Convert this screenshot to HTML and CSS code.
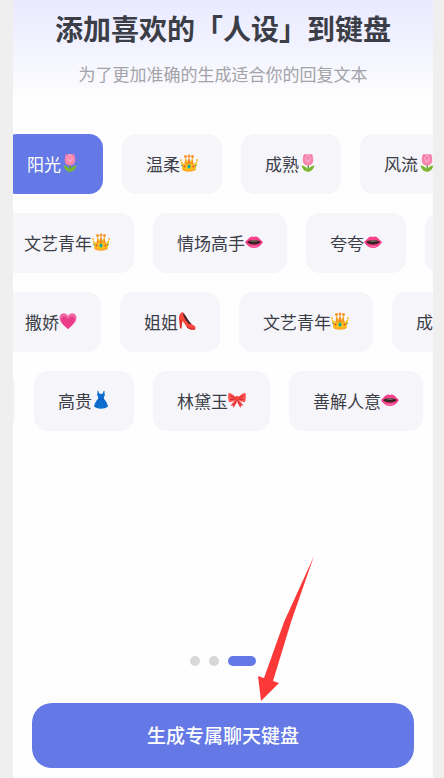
FILE: index.html
```html
<!DOCTYPE html>
<html lang="zh-CN">
<head>
    <meta charset="utf-8">
    <meta name="viewport" content="width=device-width, initial-scale=1">
    <title>添加人设</title>
    <link rel="stylesheet" href="styles.css">
</head>

<body>
    <!-- icon shapes used by the chips -->
    <svg class="sprite" aria-hidden="true">
        <symbol id="tulip" viewBox="0 0 36 36">
            <path d="M17 20h3v14h-3z" fill="#689f38"/>
            <path d="M18 36C10 34 7 30 5 23c6 0 10 3 13 9 3-6 7-9 13-9-2 7-5 11-13 13z" fill="#7cb82f"/>
            <path d="M9 2c1-2 3-2 5-1 2-2 6-2 8 0 2-1 5-1 5 1 3 11 2 21-9 21S6 13 9 2z" fill="#f583ae"/>
            <path d="M14 2c2-2 6-2 8 0 3 6 2 14-4 16-6-2-7-10-4-16z" fill="#f9a0c0"/>
            <path d="M10 2c4 1 7 4 8 9 1-5 4-8 8-9" fill="none" stroke="#ee6a9c" stroke-width="1.5"/>
        </symbol>
        <symbol id="crown" viewBox="0 0 36 36">
            <path d="M1 13l8 8 2-14 7 13 7-13 2 14 8-8-4 18c-4 5-22 5-26 0z" fill="#fcc21b"/>
            <path d="M11 8l2 13h-4zM18 5l4 15h-8zM25 8l2 13h-4z" fill="#ef8a25"/>
            <path d="M5 28c6 5 20 5 26 0v4c-5 4-21 4-26 0z" fill="#ffa726"/>
            <circle cx="2" cy="12" r="2" fill="#ffb82e"/>
            <circle cx="34" cy="12" r="2" fill="#ffb82e"/>
            <circle cx="11" cy="5" r="3" fill="#f79329"/>
            <circle cx="18" cy="4" r="3" fill="#f79329"/>
            <circle cx="25" cy="5" r="3" fill="#f79329"/>
            <ellipse cx="18" cy="25" rx="3" ry="4" fill="#00a99d"/>
            <circle cx="9" cy="25" r="2" fill="#e5393b"/>
            <circle cx="27" cy="25" r="2" fill="#e5393b"/>
            <circle cx="4" cy="23" r="1.5" fill="#26a69a"/>
            <circle cx="32" cy="23" r="1.5" fill="#26a69a"/>
        </symbol>
        <symbol id="lips" viewBox="0 0 36 36">
            <path d="M0 18C6 13 10 7 14 7c2 0 3 1 4 1s2-1 4-1c4 0 8 6 14 11-5 8-11 12-18 12S5 26 0 18z" fill="#f8408c"/>
            <path d="M4 18c5-3 9-4 14-4s9 1 14 4c-4 4-9 5-14 5S8 22 4 18z" fill="#3a2422"/>
            <path d="M9 16c5-2 13-2 18 0-5 2-13 2-18 0z" fill="#8e7874"/>
            <path d="M12 26c4 2 8 2 12 0" fill="none" stroke="#ff83b5" stroke-width="2"/>
        </symbol>
        <symbol id="heart" viewBox="0 0 36 36">
            <path d="M18 34C10 27 1 21 1 11 1 1 14-1 18 8c4-9 17-7 17 3 0 10-9 16-17 23z" fill="#f06ba5"/>
            <path d="M18 34C11 27 4 21 4 13c0-8 10-9 14-1 4-8 14-7 14 1 0 8-7 14-14 21z" fill="#ea3c87"/>
            <path d="M5 12c2-6 9-6 13 1 4-7 11-7 13-1" fill="none" stroke="#f58bb9" stroke-width="1.5"/>
        </symbol>
        <symbol id="heel" viewBox="0 0 36 36">
            <path d="M2 12l7 4-2 17H4z" fill="#e02f2b"/>
            <path d="M9 0C4 2 1 8 2 15c7 1 10 6 14 13 3 6 9 8 18 7 2-3 1-6-2-8-4-2-7-4-10-8C17 12 14 4 9 0z" fill="#f9473c"/>
            <path d="M10 2c0 5 4 13 10 20 3 3 6 2 7 1-3-2-5-5-8-9-3-5-5-9-9-12z" fill="#35252b"/>
            <path d="M18 30c4 4 10 5 16 4" fill="none" stroke="#b71c1c" stroke-width="2"/>
        </symbol>
        <symbol id="dress" viewBox="0 0 36 36">
            <path d="M11 0h2c0 4 2 6 5 6s5-2 5-6h2c0 4 0 6 1 8-2 3-3 5-2 8 4 4 7 9 8 15-8 6-20 6-28 0 1-6 4-11 8-15 1-3 0-5-2-8 1-2 1-4 1-8z" fill="#0d6fd0"/>
            <path d="M12 15h12v2H12z" fill="#0b57b0"/>
            <path d="M14 19l-4 13M22 19l4 13" fill="none" stroke="#0b5fbd" stroke-width="1.5"/>
        </symbol>
        <symbol id="bow" viewBox="0 0 36 36">
            <path d="M16 17L5 29l5 0 1 5 8-14zM20 17l11 12h-5l-1 5-8-14z" fill="#e93b3f"/>
            <path d="M16 13C11 7 4 3 1 4c-1 5-1 12 1 18 6 1 11-2 14-5zM20 13c5-6 12-10 15-9 1 5 1 12-1 18-6 1-11-2-14-5z" fill="#ff5252"/>
            <path d="M15 15L5 9M15 16L5 17M21 15l10-6M21 16l10 1" fill="none" stroke="#c62828" stroke-width="2"/>
            <rect x="14" y="10" width="8" height="10" rx="3" fill="#f44336"/>
        </symbol>
    </svg>

    <main class="screen">
        <header class="intro">
            <h1>添加喜欢的「人设」到键盘</h1>
            <p>为了更加准确的生成适合你的回复文本</p>
        </header>

        <div class="rows">
            <div class="row row-1">
                <button type="button" class="chip active">阳光<svg class="emoji"><use href="#tulip"/></svg></button>
                <button type="button" class="chip">温柔<svg class="emoji"><use href="#crown"/></svg></button>
                <button type="button" class="chip">成熟<svg class="emoji"><use href="#tulip"/></svg></button>
                <button type="button" class="chip">风流<svg class="emoji"><use href="#tulip"/></svg></button>
            </div>
            <div class="row row-2">
                <button type="button" class="chip">文艺青年<svg class="emoji"><use href="#crown"/></svg></button>
                <button type="button" class="chip">情场高手<svg class="emoji"><use href="#lips"/></svg></button>
                <button type="button" class="chip">夸夸<svg class="emoji"><use href="#lips"/></svg></button>
                <button type="button" class="chip" aria-label="更多"></button>
            </div>
            <div class="row row-3">
                <button type="button" class="chip">撒娇<svg class="emoji"><use href="#heart"/></svg></button>
                <button type="button" class="chip">姐姐<svg class="emoji"><use href="#heel"/></svg></button>
                <button type="button" class="chip">文艺青年<svg class="emoji"><use href="#crown"/></svg></button>
                <button type="button" class="chip">成<svg class="emoji"><use href="#tulip"/></svg></button>
            </div>
            <div class="row row-4">
                <button type="button" class="chip" aria-label="更多"></button>
                <button type="button" class="chip">高贵<svg class="emoji"><use href="#dress"/></svg></button>
                <button type="button" class="chip">林黛玉<svg class="emoji"><use href="#bow"/></svg></button>
                <button type="button" class="chip">善解人意<svg class="emoji"><use href="#lips"/></svg></button>
            </div>
        </div>

        <footer class="bottom">
            <div class="dots">
                <span class="dot"></span>
                <span class="dot"></span>
                <span class="dot current"></span>
            </div>
            <button type="button" class="submit">生成专属聊天键盘</button>
            <svg class="arrow" viewBox="0 0 56 145" aria-hidden="true">
                <path d="M56 0L26 66 6 122 0 120l3 25 18-18-6-2L33 66z" fill="#fc3838"/>
            </svg>
        </footer>
    </main>
</body>
</html>
```
FILE: styles.css
```css
* {
    box-sizing: border-box;
}

body {
    margin: 0;
    padding: 0 11px 0 13px;
    background: #efefef;
    font-family: "Noto Sans CJK SC", sans-serif;
    color: #3b3d47;
}

button {
    border: none;
    font-family: inherit;
    cursor: pointer;
}

.sprite {
    display: none;
}

.screen {
    display: flex;
    flex-direction: column;
    min-height: 100vh;
    padding: 8px 0 10px;
    overflow: hidden;
    background: #fefefe linear-gradient(#e9eaff, #f5f5ff 60px, #fefefe 100px) no-repeat;
}

.intro {
    text-align: center;
}

.intro h1 {
    margin: 0;
    font-size: 28px;
    font-weight: 700;
    line-height: 40px;
}

.intro p {
    margin: 14px 0 0;
    font-size: 17px;
    line-height: 24px;
    color: #a3a3a8;
}

/* chips */
.rows {
    display: flex;
    flex-direction: column;
    gap: 19px;
    margin-top: 48px;
}

.row {
    display: flex;
    gap: 19px;
}

/* every row is scrolled by a different amount */
.row-1 {
    margin-left: -10px;
}

.row-2 {
    margin-left: -13px;
}

.row-3 {
    margin-left: -12px;
}

.row-4 {
    margin-left: -98px;
}

.chip {
    display: flex;
    flex: none;
    align-items: center;
    min-width: 100px;
    height: 60px;
    padding: 0 24px 2px;
    border-radius: 14px;
    background: #f5f5fa;
    font-size: 17px;
    color: #3b3d47;
}

.chip.active {
    background: #6479e6;
    color: #fff;
}

.emoji {
    width: 18px;
    height: 18px;
}

/* dots and main button */
.bottom {
    position: relative;
    margin-top: auto;
    padding: 0 19px;
}

.dots {
    display: flex;
    justify-content: center;
    gap: 9px;
    margin-bottom: 37px;
}

.dot {
    width: 10px;
    height: 10px;
    border-radius: 5px;
    background: #d8d8d8;
}

.dot.current {
    width: 28px;
    background: #6479e6;
}

.submit {
    width: 100%;
    height: 65px;
    padding: 0 0 2px;
    border-radius: 20px;
    background: #6479e6;
    font-size: 19px;
    font-weight: 500;
    color: #fff;
}

.arrow {
    position: absolute;
    left: calc(50% + 35px);
    bottom: 67px;
    width: 56px;
    height: 145px;
}
```
